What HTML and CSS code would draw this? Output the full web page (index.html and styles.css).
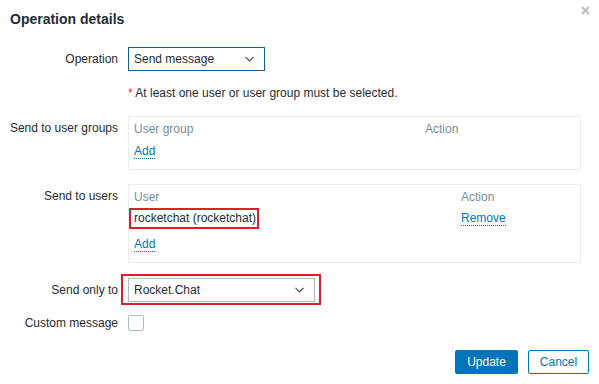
FILE: index.html
```html
<!DOCTYPE html>
<html>
<head>
<meta charset="utf-8">
<link rel="stylesheet" href="styles.css">
</head>
<body>
<div class="dialog">
  <div class="header">
    <h1 class="title">Operation details</h1>
    <button class="close" aria-label="Close">
      <svg width="9" height="9" viewBox="0 0 9 9"><path d="M1 1 L8 8 M8 1 L1 8" stroke="#b4c0c7" stroke-width="2" fill="none"/></svg>
    </button>
  </div>
  <div class="form">
    <div class="row row-op">
      <div class="label">Operation</div>
      <div class="field">
        <div class="select select-focus select-op">
          <span>Send message</span>
          <svg class="chev" width="9" height="6" viewBox="0 0 9 6"><path d="M0.5 0.8 L4.5 4.8 L8.5 0.8" stroke="#44525a" stroke-width="1.2" fill="none"/></svg>
        </div>
      </div>
    </div>
    <div class="row row-note">
      <div class="label"></div>
      <div class="field note"><span class="req">*</span> At least one user or user group must be selected.</div>
    </div>
    <div class="row row-groups">
      <div class="label label-top">Send to user groups</div>
      <div class="field">
        <div class="box">
          <div class="trow thead groups-cols"><span>User group</span><span>Action</span></div>
          <div class="trow tadd tadd-groups"><a class="link">Add</a></div>
        </div>
      </div>
    </div>
    <div class="row row-users">
      <div class="label label-top">Send to users</div>
      <div class="field">
        <div class="box users-box">
          <div class="trow thead users-cols"><span>User</span><span>Action</span></div>
          <div class="trow tuser"><span class="hl-cell">rocketchat (rocketchat)</span><a class="link">Remove</a></div>
          <div class="trow tadd tadd-users"><a class="link">Add</a></div>
        </div>
      </div>
    </div>
    <div class="row row-only">
      <div class="label">Send only to</div>
      <div class="field">
        <div class="hl-wrap">
          <div class="select select-only">
            <span>Rocket.Chat</span>
            <svg class="chev" width="9" height="6" viewBox="0 0 9 6"><path d="M0.5 0.8 L4.5 4.8 L8.5 0.8" stroke="#44525a" stroke-width="1.2" fill="none"/></svg>
          </div>
        </div>
      </div>
    </div>
    <div class="row row-custom">
      <div class="label">Custom message</div>
      <div class="field"><span class="checkbox"></span></div>
    </div>
  </div>
  <div class="buttons">
    <button class="btn btn-primary">Update</button>
    <button class="btn btn-alt">Cancel</button>
  </div>
</div>
</body>
</html>
```

FILE: styles.css
```css
* { box-sizing: border-box; }
html, body { margin: 0; padding: 0; background: #ffffff; }
body {
  font-family: "Liberation Sans", Arial, sans-serif;
  font-size: 12px;
  color: #1f2c33;
  width: 599px;
  height: 384px;
  overflow: hidden;
}
.dialog { position: relative; width: 599px; height: 384px; }
.header { padding: 11px 10px 0 10px; height: 27px; }
.title {
  margin: 0;
  font-size: 14px;
  font-weight: bold;
  line-height: 16px;
  color: #1f2c33;
}
.close {
  position: absolute;
  top: 5px;
  right: 8px;
  width: 11px;
  height: 11px;
  padding: 1px;
  border: 0;
  background: transparent;
  display: flex;
  align-items: center;
  justify-content: center;
}
.form { padding: 0 18px 0 0; }
.row { display: flex; align-items: center; }
.label {
  width: 118px;
  flex: 0 0 118px;
  text-align: right;
  line-height: 24px;
  margin-right: 10px;
  white-space: nowrap;
}
.label-top { align-self: flex-start; }
.field { flex: 1 1 auto; }
.row-op { margin-top: 20px; }
.row-note { margin-top: 15px; }
.row-groups { margin-top: 16px; }
.row-users { margin-top: 14px; }
.row-only { margin-top: 11px; }
.row-custom { margin-top: 6px; }

.select {
  height: 24px;
  border: 1px solid #acbbc2;
  padding: 0 10px 0 5px;
  display: flex;
  align-items: center;
  justify-content: space-between;
  background: #fff;
  line-height: 22px;
}
.select-focus { border-color: #1a5f93; }
.select-op { width: 137px; }
.select-only { width: 187px; }
.chev { flex: 0 0 auto; }
.note { line-height: 14px; }
.req { color: #e33734; }

.box {
  border: 1px solid #ebeef0;
  padding: 2px 5px 7px 5px;
}
.box.users-box { padding-bottom: 3px; }
.trow { height: 21px; line-height: 21px; white-space: nowrap; }
.thead { display: flex; color: #768d99; }
.groups-cols span:first-child { width: 291px; }
.users-cols span:first-child { width: 327px; }
.tadd-groups { height: 22px; line-height: 22px; }
.tadd-users { height: 30px; line-height: 30px; }
.link {
  color: #0275b8;
  text-decoration: none;
  border-bottom: 1px dotted #0275b8;
  cursor: pointer;
}
.hl-cell {
  display: inline-block;
  vertical-align: top;
  margin-left: -5px;
  margin-right: 202px;
  width: 130px;
  height: 21px;
  line-height: 17px;
  border: 2px solid #e41c2a;
  padding: 0 3px;
  white-space: nowrap;
}
.hl-wrap {
  display: inline-block;
  margin-left: -7px;
  border: 2px solid #e41c2a;
  padding: 2px 4px 1px 5px;
}
.checkbox {
  display: block;
  width: 16px;
  height: 16px;
  border: 1px solid #acbbc2;
  border-radius: 2px;
  background: #fff;
}
.buttons {
  position: absolute;
  right: 10px;
  top: 350px;
  display: flex;
  gap: 10px;
}
.btn {
  height: 24px;
  font-family: "Liberation Sans", Arial, sans-serif;
  font-size: 12px;
  border-radius: 2px;
  padding: 0;
  cursor: pointer;
}
.btn-primary {
  width: 63px;
  background: #0275b8;
  border: 1px solid #0275b8;
  color: #ffffff;
}
.btn-alt {
  width: 61px;
  background: #ffffff;
  border: 1px solid #0275b8;
  color: #0275b8;
}
```
